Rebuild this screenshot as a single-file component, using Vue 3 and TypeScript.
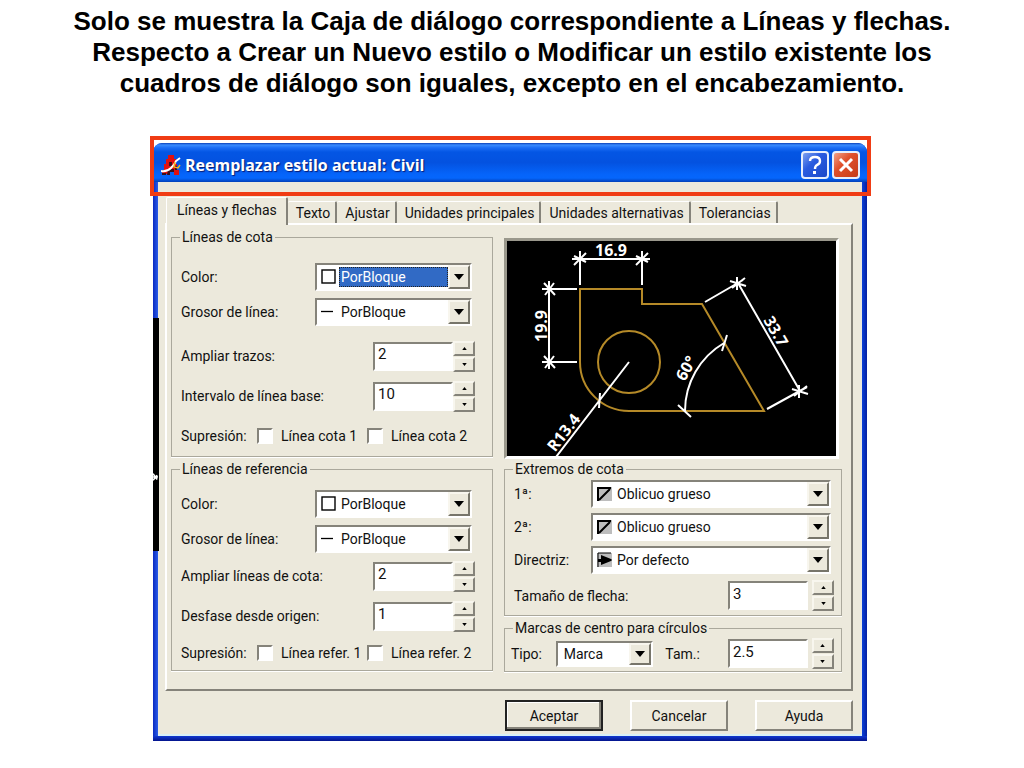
<script setup lang="ts">
import { ref } from 'vue'

interface ComboRow { id: string; label: string; value: string; icon: string; focused?: boolean }
interface SpinRow { id: string; label: string; value: string }
interface LineGroup { title: string; kind: string; combos: ComboRow[]; spins: SpinRow[]; checks: string[] }

const tabs = ['Líneas y flechas', 'Texto', 'Ajustar', 'Unidades principales', 'Unidades alternativas', 'Tolerancias']
const activeTab = ref(0)

const groups = ref<LineGroup[]>([
  {
    title: 'Líneas de cota',
    kind: 'dimension',
    combos: [
      { id: 'dim-color', label: 'Color:', value: 'PorBloque', icon: 'swatch', focused: true },
      { id: 'dim-weight', label: 'Grosor de línea:', value: 'PorBloque', icon: 'line' },
    ],
    spins: [
      { id: 'dim-extend', label: 'Ampliar trazos:', value: '2' },
      { id: 'dim-spacing', label: 'Intervalo de línea base:', value: '10' },
    ],
    checks: ['Línea cota 1', 'Línea cota 2'],
  },
  {
    title: 'Líneas de referencia',
    kind: 'extension',
    combos: [
      { id: 'ext-color', label: 'Color:', value: 'PorBloque', icon: 'swatch' },
      { id: 'ext-weight', label: 'Grosor de línea:', value: 'PorBloque', icon: 'line' },
    ],
    spins: [
      { id: 'ext-extend', label: 'Ampliar líneas de cota:', value: '2' },
      { id: 'ext-offset', label: 'Desfase desde origen:', value: '1' },
    ],
    checks: ['Línea refer. 1', 'Línea refer. 2'],
  },
])

const heads = ref<ComboRow[]>([
  { id: 'head-1', label: '1ª:', value: 'Oblicuo grueso', icon: 'oblique' },
  { id: 'head-2', label: '2ª:', value: 'Oblicuo grueso', icon: 'oblique' },
  { id: 'leader', label: 'Directriz:', value: 'Por defecto', icon: 'arrow' },
])

const arrowSize = ref('3')
const markSize = ref('2.5')
const markType = ref('Marca')

function step(value: string, by: number): string {
  return String(Math.max(0, Number(value) + by))
}
</script>

<template>
  <main class="slide">
    <h1 class="heading">
      Solo se muestra la Caja de diálogo correspondiente a Líneas y flechas.<br />
      Respecto a Crear un Nuevo estilo o Modificar un estilo existente los<br />
      cuadros de diálogo son iguales, excepto en el encabezamiento.
    </h1>

    <section class="dialog" aria-labelledby="dialog-title">
      <header class="titlebar">
        <svg class="app-icon" viewBox="0 0 20 22" aria-hidden="true">
          <path d="M7 1h6v4h2v5h1v6h2v5h-5v-5H7v4H1v-4h2v-6h2V5h2z" fill="#e01010" />
          <path d="M8 8h3v4H8zM7 15h6v3H9v3H6zM14 12h2v4h-2zM1 19h4v2H1z" fill="#3a1020" />
          <path d="M0 17q6 1 10-3t5-7l4-3" fill="none" stroke="#fff" stroke-width="2" />
          <path d="M14 8l-1 5 4 1 2-3" fill="none" stroke="#f0b020" stroke-width="1.500" />
        </svg>
        <h2 id="dialog-title" class="title">Reemplazar estilo actual: Civil</h2>
        <div class="caption-buttons">
          <button class="caption-button" type="button" aria-label="Ayuda contextual">
            <svg viewBox="0 0 24 24" aria-hidden="true">
              <path d="M7 8q0-4 5-4t5 4q0 3-3 4-2 1-2 4" fill="none" stroke="#fff" stroke-width="2.400" />
              <rect x="10" y="18" width="3" height="3" fill="#fff" />
            </svg>
          </button>
          <button class="caption-button close" type="button" aria-label="Cerrar">
            <svg viewBox="0 0 24 24" aria-hidden="true">
              <path d="M6 6l12 12M18 6L6 18" stroke="#fff" stroke-width="3" />
            </svg>
          </button>
        </div>
      </header>

      <div class="body">
        <div class="tabs" role="tablist">
          <button
            v-for="(tab, i) in tabs"
            :key="tab"
            type="button"
            role="tab"
            class="tab"
            :class="{ active: i === activeTab }"
            :aria-selected="i === activeTab"
            @click="activeTab = i"
          >{{ tab }}</button>
        </div>

        <div class="panel" role="tabpanel">
          <div class="column">
            <fieldset v-for="g in groups" :key="g.kind" class="group lines" :class="g.kind">
              <legend>{{ g.title }}</legend>
              <div v-for="c in g.combos" :key="c.id" class="row combo-row">
                <label :for="c.id">{{ c.label }}</label>
                <div class="combo">
                  <svg v-if="c.icon === 'swatch'" class="combo-icon" viewBox="0 0 15 16" aria-hidden="true">
                    <rect x="1" y="1" width="13" height="13" fill="#fff" stroke="#000" stroke-width="1.400" />
                  </svg>
                  <svg v-else class="combo-icon" viewBox="0 0 15 16" aria-hidden="true">
                    <path d="M0 7.500h12" stroke="#000" stroke-width="1.300" />
                  </svg>
                  <select :id="c.id" v-model="c.value" :class="{ focused: c.focused }">
                    <option>PorBloque</option>
                  </select>
                  <span class="drop" aria-hidden="true"><svg viewBox="0 0 10 6"><path d="M0 0h10L5 6z" /></svg></span>
                </div>
              </div>
              <div v-for="s in g.spins" :key="s.id" class="row spin-row">
                <label :for="s.id">{{ s.label }}</label>
                <div class="spin">
                  <input :id="s.id" v-model="s.value" type="text" />
                  <div class="steppers">
                    <button type="button" aria-label="Aumentar" @click="s.value = step(s.value, 1)"><svg viewBox="0 0 6 4"><path d="M0 4h6L3 0z" /></svg></button>
                    <button type="button" aria-label="Reducir" @click="s.value = step(s.value, -1)"><svg viewBox="0 0 6 4"><path d="M0 0h6L3 4z" /></svg></button>
                  </div>
                </div>
              </div>
              <div class="row checks">
                <span class="checks-title">Supresión:</span>
                <label v-for="k in g.checks" :key="k" class="check"><input type="checkbox" />{{ k }}</label>
              </div>
            </fieldset>
          </div>

          <div class="column right">
            <div class="preview">
              <svg viewBox="506 241 329 215" role="img" aria-label="Vista previa de cotas">
                <g fill="none" stroke="#b58a28" stroke-width="2">
                  <path d="M579 289h62v15h60l62 107H628a49 49 0 0 1-49-49z" />
                  <circle cx="628" cy="362" r="31" />
                </g>
                <g fill="none" stroke="#fff" stroke-width="2">
                  <path d="M571 259h78M579 251v34M641 251v34M573 265l12-12M635 265l12-12M573 256l12 6M635 256l12 6" />
                  <path d="M548 281v88M541 289h35M541 362h35M543 283l11 12M543 356l11 12M544 295l9-12M544 368l9-12" />
                  <path d="M737 283l62 108M704 302l38-22M766 409l40-22M729 281l16 5M736 277v13M791 389l16 5M798 385v13M731 288l13-10M793 396l13-10" />
                  <path d="M684 411a79 79 0 0 1 39-68M677 405l13 12M726 335l-5 16" />
                  <path d="M628 362l-73 95M599 393l-1 15" />
                </g>
                <g class="cad-text" fill="#fff" text-anchor="middle">
                  <text x="610" y="256">16.9</text>
                  <text transform="translate(546 326) rotate(-90)">19.9</text>
                  <text transform="translate(770 334) rotate(60)">33.7</text>
                  <text transform="translate(690 371) rotate(-60)">60°</text>
                  <text transform="translate(567 436) rotate(-52)">R13.4</text>
                </g>
              </svg>
            </div>

            <fieldset class="group heads">
              <legend>Extremos de cota</legend>
              <div v-for="h in heads" :key="h.id" class="row head-row">
                <label :for="h.id">{{ h.label }}</label>
                <div class="combo">
                  <svg class="combo-icon" viewBox="0 0 15 16" aria-hidden="true">
                    <rect x="0" y="1" width="15" height="14" fill="#bdbdbd" />
                    <path v-if="h.icon === 'oblique'" d="M1 15V2h13M2 14L13 3" fill="none" stroke="#000" stroke-width="2" />
                    <g v-else>
                      <path d="M1 15V1h13M2 8h13" fill="none" stroke="#000" stroke-width="1" />
                      <path d="M4 3l10 4v2L4 13z" />
                      <path d="M1 7h5v3H1z" />
                    </g>
                  </svg>
                  <select :id="h.id" v-model="h.value">
                    <option>Oblicuo grueso</option>
                    <option>Por defecto</option>
                  </select>
                  <span class="drop" aria-hidden="true"><svg viewBox="0 0 10 6"><path d="M0 0h10L5 6z" /></svg></span>
                </div>
              </div>
              <div class="row size-row">
                <label for="arrow-size">Tamaño de flecha:</label>
                <div class="spin">
                  <input id="arrow-size" v-model="arrowSize" type="text" />
                  <div class="steppers">
                    <button type="button" aria-label="Aumentar" @click="arrowSize = step(arrowSize, 1)"><svg viewBox="0 0 6 4"><path d="M0 4h6L3 0z" /></svg></button>
                    <button type="button" aria-label="Reducir" @click="arrowSize = step(arrowSize, -1)"><svg viewBox="0 0 6 4"><path d="M0 0h6L3 4z" /></svg></button>
                  </div>
                </div>
              </div>
            </fieldset>

            <fieldset class="group marks">
              <legend>Marcas de centro para círculos</legend>
              <div class="row mark-row">
                <label for="mark-type">Tipo:</label>
                <div class="combo small">
                  <select id="mark-type" v-model="markType"><option>Marca</option></select>
                  <span class="drop" aria-hidden="true"><svg viewBox="0 0 10 6"><path d="M0 0h10L5 6z" /></svg></span>
                </div>
                <label class="mark-size" for="mark-size">Tam.:</label>
                <div class="spin">
                  <input id="mark-size" v-model="markSize" type="text" />
                  <div class="steppers">
                    <button type="button" aria-label="Aumentar" @click="markSize = step(markSize, 1)"><svg viewBox="0 0 6 4"><path d="M0 4h6L3 0z" /></svg></button>
                    <button type="button" aria-label="Reducir" @click="markSize = step(markSize, -1)"><svg viewBox="0 0 6 4"><path d="M0 0h6L3 4z" /></svg></button>
                  </div>
                </div>
              </div>
            </fieldset>
          </div>
        </div>

        <footer class="actions">
          <button type="button" class="default">Aceptar</button>
          <button type="button">Cancelar</button>
          <button type="button">Ayuda</button>
        </footer>
      </div>

      <div class="backdrop-strip" aria-hidden="true">
        <svg viewBox="0 0 6 12"><path d="M0 2l5 7M0 10l5-6M0 6h6" stroke="#fff" stroke-width="2" /></svg>
      </div>
      <div class="highlight" aria-hidden="true"></div>
    </section>
  </main>
</template>

<style>
body {
  margin: 0;
  background: #fff;
}
</style>

<style scoped>
* {
  box-sizing: border-box;
}
.slide {
  min-height: 100vh;
  padding-top: 6px;
  font-family: Roboto, "Liberation Sans", sans-serif;
  font-size: 14px;
  line-height: 16px;
  color: #111;
}
.heading {
  margin: 0 0 44px;
  font: bold 26px/31px "Liberation Sans", Arial, sans-serif;
  text-align: center;
  white-space: nowrap;
  color: #000;
}
.dialog {
  position: relative;
  margin: 0 157px 0 153px;
  padding-bottom: 5px;
  border-radius: 9px 9px 0 0;
  background: linear-gradient(90deg, #0a2ac0 0, #2a5ce8 5px, #0a40d8 calc(100% - 5px), #0520a0 100%);
}
.titlebar {
  display: flex;
  align-items: center;
  gap: 4px;
  height: 39px;
  padding: 5px 7px 0 8px;
  border-radius: 9px 9px 0 0;
  background: linear-gradient(#0a40b8 0, #3a8cff 2px, #1a6cf4 5px, #0456e4 9px, #0452e0 50%, #0564fa 80%, #0566fc 90%, #0340b8 100%);
}
.app-icon {
  width: 20px;
  height: 22px;
}
.title {
  flex: 1;
  margin: 0;
  font: bold 16px/24px "Open Sans", "Noto Sans", sans-serif;
  color: #fff;
  text-shadow: 1px 1px 1px #0a1a70;
}
.caption-buttons {
  display: flex;
  gap: 3px;
}
.caption-button {
  width: 28px;
  height: 28px;
  padding: 0;
  border: 2px solid #e6eefc;
  border-radius: 4px;
  background: linear-gradient(135deg, #7ca0f0, #2a5ce0 40%, #1a48c8);
}
.caption-button.close {
  background: linear-gradient(135deg, #f0a088, #e0502c 40%, #c43c18);
}
.caption-button svg {
  display: block;
  width: 24px;
  height: 24px;
}
.body {
  margin: 0 5px;
  padding: 15px 9px 3px 7px;
  background: #ece9dc;
  border-bottom: 2px solid #d8f0f8;
}
.dialog::after {
  content: "";
  position: absolute;
  inset: auto 0 0;
  height: 5px;
  background: linear-gradient(#1038d0, #04148c);
}
.tabs {
  display: flex;
  align-items: flex-end;
  height: 26px;
  padding-left: 1px;
}
.tab {
  height: 22px;
  padding: 0 5px 0 8px;
  border: 0;
  border-top: 1px solid #fff;
  border-right: 2px solid #85837a;
  border-radius: 2px 2px 0 0;
  background: #ece9dc;
  font: inherit;
  color: inherit;
  white-space: nowrap;
}
.tab.active {
  height: 28px;
  margin-bottom: -2px;
  padding: 0 9px 4px 10px;
  border-left: 1px solid #fff;
  position: relative;
}
.panel {
  display: grid;
  grid-template-columns: 322fr 338fr;
  gap: 11px;
  padding: 4px 9px 17px 4px;
  border: 2px solid;
  border-color: #fff #85837a #85837a #fff;
}
.column {
  display: flex;
  flex-direction: column;
  gap: 4px;
  min-width: 0;
}
.column.right {
  padding-top: 9px;
}
.group {
  min-width: 0;
  margin: 0;
  padding: 0;
  border: 1px solid #aaa89c;
  box-shadow: 0 1px 0 #fff;
}
.group legend {
  margin-left: 8px;
  padding: 0 2px;
  line-height: 16px;
}
.row {
  display: flex;
  align-items: center;
  justify-content: space-between;
  padding-left: 9px;
}
.combo-row {
  height: 35px;
  padding-right: 20px;
}
.spin-row {
  height: 40px;
  padding-right: 17px;
}
.dimension .combo-row:nth-of-type(1) {
  margin-top: 14px;
}
.dimension .spin-row:nth-of-type(3) {
  margin-top: 7px;
}
.extension .combo-row:nth-of-type(1) {
  margin-top: 9px;
}
.checks {
  justify-content: flex-start;
  height: 40px;
}
.extension .checks {
  height: 34px;
}
.checks-title {
  width: 76px;
}
.check {
  display: flex;
  align-items: center;
  gap: 8px;
  width: 110px;
  white-space: nowrap;
}
.check input {
  flex: none;
  appearance: none;
  width: 16px;
  height: 16px;
  margin: 0;
  border: 2px solid;
  border-color: #85837a #fff #fff #85837a;
  background: #fff;
}
.combo {
  display: flex;
  align-items: center;
  width: 157px;
  height: 28px;
  padding-left: 4px;
  border: 2px solid;
  border-color: #85837a #fff #fff #85837a;
  background: #fff;
}
.combo-icon {
  flex: none;
  width: 15px;
  height: 16px;
  margin-right: 3px;
}
.combo select {
  flex: 1;
  min-width: 0;
  height: 20px;
  padding: 0 0 0 2px;
  appearance: none;
  border: 0;
  outline: 0;
  background: transparent;
  font: inherit;
  color: inherit;
}
.combo select.focused {
  background: #316ac5;
  color: #fff;
  outline: 1px dotted #222;
  outline-offset: -1px;
}
.drop {
  flex: none;
  display: grid;
  place-items: center;
  width: 22px;
  height: 24px;
  border: 2px solid;
  border-color: #f8f6ee #77756a #77756a #f8f6ee;
  background: #ece9dc;
}
.drop svg {
  width: 10px;
  height: 6px;
}
.spin {
  display: flex;
  align-items: center;
}
.spin input {
  width: 80px;
  height: 29px;
  padding: 0 0 4px 3px;
  border: 2px solid;
  border-color: #85837a #fff #fff #85837a;
  background: #fff;
  font: inherit;
  font-size: 15px;
  color: inherit;
}
.steppers {
  display: flex;
  flex-direction: column;
  gap: 1px;
}
.steppers button {
  display: grid;
  place-items: center;
  width: 22px;
  height: 15px;
  padding: 0;
  border: 2px solid;
  border-color: #f8f6ee #85837a #85837a #f8f6ee;
  background: #ece9dc;
}
.steppers svg {
  width: 5px;
  height: 3px;
}
.preview {
  margin: 0 3px -2px 0;
  border: 3px solid;
  border-color: #9a988c #fff #fff #9a988c;
  background: #000;
}
.preview svg {
  display: block;
  width: 100%;
}
.cad-text {
  font: bold 16px "Open Sans", sans-serif;
}
.head-row {
  height: 33px;
  padding-right: 10px;
}
.head-row .combo {
  width: 240px;
}
.size-row {
  height: 39px;
  padding-right: 7px;
}
.right .spin {
  gap: 4px;
}
.mark-row {
  height: 35px;
  padding: 0 7px 0 6px;
}
.combo.small {
  width: 97px;
  height: 26px;
}
.combo.small .drop {
  height: 22px;
}
.mark-row label:first-child {
  width: 32px;
}
.mark-size {
  width: 50px;
}
.actions {
  display: flex;
  justify-content: flex-end;
  gap: 27px;
  padding-top: 9px;
}
.actions button {
  width: 98px;
  height: 31px;
  border: 2px solid;
  border-color: #fff #85837a #85837a #fff;
  background: #ece9dc;
  font: inherit;
  color: inherit;
}
.actions .default {
  border-color: #222;
  box-shadow: inset -2px -2px 0 #85837a, inset 1px 1px 0 #fff;
}
.backdrop-strip {
  position: absolute;
  left: 0;
  top: 175px;
  width: 6px;
  height: 233px;
  background: #000;
}
.backdrop-strip svg {
  position: absolute;
  left: 0;
  top: 153px;
  width: 5px;
  height: 12px;
}
.highlight {
  position: absolute;
  inset: -7px -4px auto -3px;
  height: 60px;
  border: 4px solid #f03c14;
  pointer-events: none;
}
</style>
